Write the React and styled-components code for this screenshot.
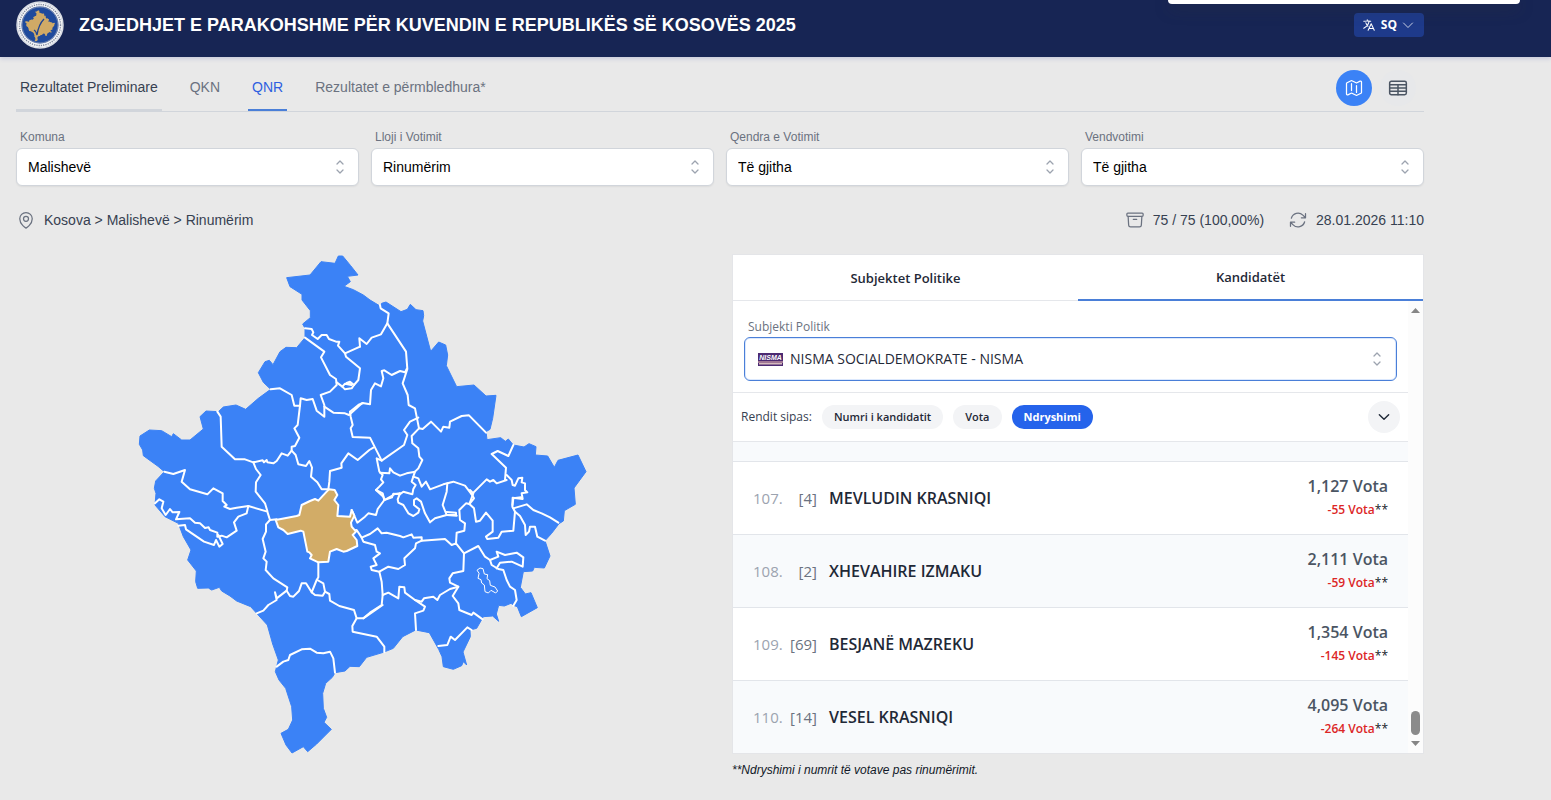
import React from 'react';
import styled, { createGlobalStyle } from 'styled-components';

const sans = "'Liberation Sans', Arial, sans-serif";
const ui = "'Open Sans', 'Noto Sans', sans-serif";

const GlobalStyle = createGlobalStyle`
  *, *::before, *::after { box-sizing: border-box; }
  body { margin: 0; background: #e9e9e9; font-family: ${sans}; font-size: 14px; line-height: 20px; color: #374151; }
  button, select { font: inherit; color: inherit; }
  button { cursor: pointer; border: 0; background: none; padding: 0; }
  a { color: inherit; text-decoration: none; }
`;

const Container = styled.div`
  max-width: 1440px;
  padding: 0 16px;
`;
const Header = styled.header`
  background: #172554;
  box-shadow: 0 2px 4px #c9cbdc;
`;
const HeaderInner = styled(Container)`
  display: flex;
  align-items: center;
  height: 57px;
  padding-bottom: 8px;
  gap: 15px;
`;
const Title = styled.h1`
  flex: 1;
  margin: 0;
  font-size: 18px;
  line-height: 28px;
  font-weight: 700;
  color: #fff;
`;
const Popover = styled.div`
  position: absolute;
  top: 0;
  right: 31px;
  width: 352px;
  height: 4px;
  background: #fff;
  border-radius: 0 0 6px 6px;
  box-shadow: 0 4px 16px rgba(60, 60, 40, 0.4);
`;
const LangButton = styled.button`
  display: flex;
  align-items: center;
  gap: 5px;
  height: 24px;
  padding: 0 10px 0 8px;
  border-radius: 4px;
  background: #1e3a8a;
  color: #fff;
  font-family: ${ui};
  font-size: 12px;
  font-weight: 700;
`;
const NavRow = styled.nav`
  display: flex;
  justify-content: space-between;
  height: 55px;
  border-bottom: 1px solid #d1d5db;
`;
const NavTabs = styled.div`
  display: flex;
  gap: 24px;
`;
const NavTab = styled.a`
  display: flex;
  align-items: center;
  padding: 8px 4px 0;
  border-bottom: 2px solid ${(p) => p.$line || 'transparent'};
  color: ${(p) => p.$color || '#6b7280'};
`;
const ViewButtons = styled.div`
  display: flex;
  align-items: center;
  gap: 8px;
  padding: 8px 8px 0 0;
`;
const ViewButton = styled.button`
  display: grid;
  place-items: center;
  width: 36px;
  height: 36px;
  border-radius: 50%;
  background: ${(p) => (p.$active ? '#3b82f6' : '#e7e8ea')};
  color: ${(p) => (p.$active ? '#fff' : '#4b5563')};
`;
const Filters = styled.div`
  display: grid;
  grid-template-columns: repeat(4, 1fr);
  gap: 12px;
  padding-top: 15px;
`;
const Field = styled.div`
  display: flex;
  flex-direction: column;
  gap: ${(p) => p.$gap || 0}px;
`;
const Label = styled.label`
  padding-left: 4px;
  font-size: 12px;
  line-height: 20px;
  color: #6b7280;
`;
const SelectBox = styled.div`
  display: grid;
  align-items: center;
  height: 38px;
  border: 1px solid #d1d5db;
  border-radius: 6px;
  background: #fff;
  box-shadow: 0 1px 2px rgba(0, 0, 0, 0.06);
  & > * { grid-area: 1 / 1; }
  & > svg { justify-self: end; margin-right: 8px; pointer-events: none; }
`;
const Select = styled.select`
  appearance: none;
  width: 100%;
  height: 100%;
  padding: 0 32px 0 11px;
  border: 0;
  outline: 0;
  background: transparent;
  color: #000;
`;
const PartyBox = styled(SelectBox)`
  height: 44px;
  border-color: #4a7fd8;
  box-shadow: inset 0 0 0 1px #dbe8fd;
  & > svg:first-child { justify-self: start; margin-left: 13px; }
  & > svg:last-child { margin-right: 9px; }
`;
const PartySelect = styled(Select)`
  padding-left: 45px;
  color: #1f2937;
  font-weight: 500;
`;
const InfoRow = styled.div`
  display: flex;
  align-items: center;
  justify-content: space-between;
  padding: 24px 0;
`;
const InfoGroup = styled.div`
  display: flex;
  gap: 24px;
`;
const Info = styled.div`
  display: flex;
  align-items: center;
  gap: 8px;
  & > svg { color: #6b7280; }
`;
const Main = styled.main`
  display: grid;
  grid-template-columns: 1fr 1fr;
  gap: 24px;
`;
const MapArea = styled.div`
  display: flex;
  justify-content: center;
  align-items: flex-start;
`;
const MapSvg = styled.svg`
  height: 500px;
  max-width: 100%;
`;
const Panel = styled.section`
  border: 1px solid #e4e5e8;
  background: #fff;
  font-family: ${ui};
`;
const PanelTabs = styled.div`
  display: grid;
  grid-template-columns: 1fr 1fr;
`;
const PanelTab = styled.button`
  height: 46px;
  border-bottom: ${(p) => (p.$active ? '2px solid #4a7fd8' : '1px solid #e5e7eb')};
  color: #1f2937;
  font-size: 13px;
  font-weight: 600;
`;
const PanelBody = styled.div`
  display: flex;
`;
const Scrolled = styled.div`
  flex: 1;
  min-width: 0;
`;
const ScrollTrack = styled.div`
  display: flex;
  flex-direction: column;
  align-items: center;
  width: 15px;
  padding: 7px 0;
  background: #fcfcfc;
`;
const Thumb = styled.div`
  width: 9px;
  height: 24px;
  margin: auto 0 6px;
  border-radius: 5px;
  background: #8b8b8b;
`;
const PartyField = styled(Field)`
  padding: 16px 11px 11px;
  border-bottom: 1px solid #e5e7eb;
`;
const SortRow = styled.div`
  display: flex;
  align-items: center;
  gap: 10px;
  height: 49px;
  padding: 0 8px;
  border-bottom: 1px solid #e5e7eb;
  font-size: 12px;
  color: #374151;
`;
const Chip = styled.button`
  height: 24px;
  padding: 0 12px;
  border-radius: 12px;
  font-size: 11px;
  font-weight: ${(p) => (p.$active ? 700 : 600)};
  background: ${(p) => (p.$active ? '#2563eb' : '#f3f4f6')};
  color: ${(p) => (p.$active ? '#fff' : '#1f2937')};
`;
const RoundButton = styled.button`
  display: grid;
  place-items: center;
  width: 32px;
  height: 32px;
  margin-left: auto;
  border-radius: 50%;
  background: #f3f4f6;
  color: #1f2937;
`;
const List = styled.ol`
  list-style: none;
  margin: 0;
  padding: 0;
`;
const Row = styled.li`
  display: flex;
  align-items: center;
  height: ${(p) => (p.$clipped ? 20 : 73)}px;
  padding: 0 20px;
  border-bottom: 1px solid #e2e5ea;
  font-size: 16px;
  line-height: 24px;
  &:nth-child(odd) { background: #f8fafc; }
  &:last-child { border-bottom: 0; height: 72px; }
`;
const Rank = styled.span`
  width: 32px;
  font-size: 15px;
  color: #9ca3af;
`;
const Num = styled.span`
  width: 32px;
  margin-right: 12px;
  font-size: 15px;
  text-align: right;
  color: #6b7280;
`;
const Name = styled.span`
  flex: 1;
  font-weight: 650;
  color: #1f2937;
`;
const Votes = styled.div`
  display: flex;
  flex-direction: column;
  align-items: flex-end;
  font-weight: 650;
  color: #4b5563;
`;
const Change = styled.span`
  font-size: 12px;
  font-weight: 600;
  color: #dc2626;
  & > span { font-weight: 400; color: #111827; }
`;
const Note = styled.p`
  margin: 6px 0 0;
  font-size: 12px;
  font-style: italic;
  color: #111827;
`;

const Icon = ({ size = 18, width = 1.5, children }) => (
  <svg width={size} height={size} viewBox="0 0 24 24" fill="none" stroke="currentColor" strokeWidth={width} strokeLinecap="round" strokeLinejoin="round" aria-hidden="true">
    {children}
  </svg>
);
const UpDown = () => (
  <svg width="20" height="20" viewBox="0 0 20 20" fill="none" stroke="#9ca3af" strokeWidth="1.3" strokeLinecap="round" strokeLinejoin="round" aria-hidden="true">
    <path d="M7 7l3-3 3 3M7 13l3 3 3-3" />
  </svg>
);

const outline = '625,33 638,33 662,62 684,90 652,94 661,110 642,124 670,134 700,150 720,165 750,183 755,175 768,171 813,200 832,193 841,178 858,194 879,197 881,212 878,228 902,319 926,291 947,300 953,330 949,362 980,425 1032,420 1068,453 1098,451 1088,520 1080,553 1068,560 1071,584 1112,578 1126,589 1135,582 1150,600 1182,606 1197,596 1218,605 1216,630 1253,633 1273,667 1284,646 1344,630 1368,680 1332,729 1336,778 1303,797 1300,828 1287,836 1265,865 1245,887 1260,933 1243,969 1213,967 1208,978 1180,980 1171,1027 1186,1047 1203,1043 1222,1088 1174,1115 1162,1085 1153,1082 1143,1075 1123,1083 1106,1081 1099,1107 1106,1129 1088,1113 1060,1115 1040,1150 1020,1155 1021,1175 999,1221 1010,1260 1000,1250 995,1262 970,1273 940,1265 936,1235 926,1213 898,1163 857,1155 818,1175 790,1210 760,1222 710,1237 688,1265 660,1264 645,1278 615,1283 607,1297 587,1315 578,1345 580,1390 590,1417 582,1432 604,1453 560,1497 533,1520 520,1505 486,1524 468,1500 453,1465 475,1453 488,1425 485,1385 467,1330 447,1305 436,1280 445,1245 428,1197 412,1140 380,1105 362,1085 320,1068 300,1053 275,1038 268,1027 245,1035 235,1029 203,1030 197,1010 199,978 173,945 183,915 160,875 145,835 105,815 75,780 78,745 73,730 77,708 103,680 84,664 40,632 38,615 28,598 30,573 58,555 95,557 125,575 130,566 155,585 180,585 220,552 210,515 228,498 265,500 280,486 318,480 347,493 385,460 422,433 400,412 385,383 405,350 418,346 429,359 450,320 468,307 500,308 525,278 525,250 518,237 541,218 541,197 516,165 516,148 480,125 470,98 540,90 573,50 615,55';

// District borders, grouped by quadrant of the map.
const borders = [
  {
    at: 'translate(0 0)',
    lines: [
      '525,250 545,252 550,262 546,270 563,282 575,270 590,270 597,282 618,290 628,290 624,302 645,325 690,305',
      '525,278 583,320 573,337 600,390 618,402 620,420 600,440 572,450 583,480 583,515 560,497 548,462 530,465 512,460 510,482 493,482 485,450 450,430 422,433',
      '645,325 648,335 690,370 685,405 672,420 660,410 650,414 664,420 645,416 637,425 620,412',
      '637,425 645,433 665,430 672,420',
      '583,485 610,503 645,505 657,510 690,480 698,474',
      '730,608 718,615 683,645 655,625 634,655 635,668 600,678 598,710 595,733',
      '510,482 503,540 493,550 508,578 495,603 485,605 485,617 497,630 505,658 528,663 538,648 546,668 543,695 562,712 575,733 595,733',
      '485,617 473,632 455,625 440,648 430,655 412,652 410,645 402,652 398,646 370,652 345,643 315,643 275,605 272,515 262,500',
      '370,652 378,672 392,690 378,712 377,740 405,775 412,798',
      '103,680 130,687 165,675 155,710 180,733 232,748 250,730 278,745 278,768 290,780 283,785 300,792 320,788 355,783',
    ],
  },
  {
    at: 'translate(660 0)',
    lines: [
      '30,305 28,280 50,297 65,278 93,268 112,235 116,205 92,190 90,180',
      '0,500 25,480 38,474 60,478 63,435 75,415 93,424 100,400 95,378 103,376 125,390 150,378 165,382 170,372',
      '112,235 168,320 172,372 158,415 173,450 176,480 195,490 207,550 218,552 243,530 273,560 280,545 298,548 300,530 335,513 357,511 408,563',
      '205,518 180,530 162,555 172,570 162,600 95,647 60,578 8,576 2,550 8,540 2,515 0,500',
      '95,647 80,640 88,680 98,690 93,703 100,712 88,725 78,735 98,745 103,765',
      '292,715 290,740 278,780 290,810 320,812',
      '470,705 440,715 430,705 420,710 410,703 365,748 345,722 310,710 280,718 240,733 228,710 215,725 205,700 190,695 195,680 170,685 150,692 130,682 120,670 118,685 90,683',
      '490,600 475,633 443,618 425,627 468,668 465,705',
      '470,690 485,705 488,720 495,722 505,700 517,698 515,712 525,715 525,735 532,742 515,745 518,762 488,758 487,780',
      '207,550 185,573 187,595 205,610 208,635 217,645 205,670 195,680',
      '190,695 185,710 197,720 190,732 187,748 160,740 150,748 130,746 126,757 103,765',
      '365,748 372,760 358,777',
    ],
  },
  {
    at: 'translate(0 735)',
    lines: [
      '355,48 412,65 420,90 440,88',
      '355,48 350,70 325,80 312,97 320,122 290,142 275,137 262,140 262,128 240,120 236,112 225,114 210,100 195,98 180,85 138,88 148,66 128,67 120,57 107,75 95,55 100,35 88,28 75,40',
      '145,107 165,105 168,118 222,155 252,165 258,150 268,170 278,162 265,135',
      '420,90 408,103 408,125 398,147 407,185 400,205 410,215 407,240 430,265 472,292 470,302 440,325 435,307 440,330 415,345 400,362 380,370',
      '470,302 480,318 490,320 507,303 515,280 528,280 545,307 560,270 565,262 565,218',
      '545,307 555,315 578,317 585,305 580,280 562,270',
      '585,305 598,312 600,332 628,348 672,360 680,385 700,385 758,345',
      '680,385 667,408 668,425 740,440 763,470 763,487',
      '440,530 460,515 475,510 480,495 515,478 540,476 560,488 580,490 600,485 610,505 615,548',
    ],
  },
  {
    at: 'translate(660 735)',
    lines: [
      '5,60 22,98 45,80 55,70 78,75 83,57 103,30 135,12 150,10',
      '78,0 100,20 103,30',
      '5,122 20,120 35,143 60,132 83,115 95,130 110,128 150,138 160,142 185,133 190,143 215,142 215,152 285,147 305,165 318,160 342,190',
      '35,143 40,155 75,165 80,185 90,190 70,205 80,225 62,230 65,240 88,245 115,230 145,237 165,225 163,205 195,175 198,160 215,152',
      '88,245 95,275 98,315 95,345 60,368 40,385',
      '98,315 115,308 145,325 148,290 163,292 165,308 195,330 215,335 222,325 250,320 262,330 270,315 300,297 325,290',
      '195,330 225,350 220,362 195,370 198,420',
      '342,190 340,243 308,250 298,265 300,278 325,290 308,318 325,340 328,360 365,375 370,368 398,388',
      '265,468 292,465 302,440 315,450 352,412 365,420',
      '342,190 385,168 405,200 420,210 425,225 445,237 460,240 470,270 480,290 495,300 500,330 490,347',
      '420,210 445,200 440,185 465,195 480,192 500,188 520,202 518,230 485,215 450,218 440,235',
      '318,160 320,128 343,122 345,100 330,90 328,60 348,40 358,42 372,55 378,95 390,92 408,68 428,92 428,125 408,140 412,147 445,143 455,125 490,122 495,65 487,50 490,25 513,22',
      '490,55 530,43 550,60 575,70 600,82 625,98',
      '495,65 510,78 525,105 527,135 537,125 540,110 555,110 562,140 585,152',
      '358,42 370,10 360,0',
      '150,10 143,28 145,38 160,45 175,70 190,78 205,68 208,58 192,45 192,30 200,25 213,35 225,70 240,97 255,85 290,75 318,75 318,68 290,66',
    ],
  },
];
const malisheve = '437,825 500,813 508,810 515,780 540,768 555,762 565,767 590,740 597,733 614,735 622,750 613,765 625,780 622,813 660,815 665,795 673,812 663,833 665,845 678,860 668,870 680,885 682,903 650,918 640,920 620,912 600,920 595,950 565,952 540,940 545,930 538,922 532,920 520,860 512,857 473,867 460,855 445,847';

const KosovoMap = () => (
  <MapSvg viewBox="0 27 1392 1500" role="img" aria-label="Kosova">
    <polygon points={outline} fill="#3b82f6" stroke="#3b82f6" strokeWidth="3" strokeLinejoin="round" />
    <g fill="none" stroke="#fff" strokeWidth="6" strokeLinejoin="round" strokeLinecap="round">
      {borders.map((b) => (
        <g key={b.at} transform={b.at}>
          {b.lines.map((l) => <polyline key={l} points={l} />)}
        </g>
      ))}
      <polygon points={malisheve} fill="#d2ac67" />
      <path strokeWidth="3" d="M1042 975l8-6 9 2 4 16 10 2-2 12 8 6 2 14 14 5 8 12-6 6-14-8-8 8-10-4-2-20-8-6-2-10-9-4 3-14z" />
    </g>
  </MapSvg>
);

const Emblem = () => (
  <svg width="48" height="48" viewBox="0 0 48 48" role="img" aria-label="KQZ">
    <circle cx="24" cy="24" r="23" fill="#1f4593" stroke="#d9dce2" strokeWidth="1.5" />
    <circle cx="24" cy="24" r="20.5" fill="none" stroke="#f2f3f5" strokeWidth="4" />
    <circle cx="24" cy="24" r="20.5" fill="none" stroke="#7d869b" strokeWidth="1.4" strokeDasharray="1.2 1.1" />
    <circle cx="24" cy="24" r="18" fill="#1f4a9c" stroke="#8d99b8" strokeWidth="0.8" />
    <polygon transform="translate(8.6 8.6) scale(0.0222 0.0208)" points={outline} fill="#d0aa66" />
    <path d="M18 29c2 1 2.500 3 3 5 1-7 3-12 7-16" fill="none" stroke="#1f4593" strokeWidth="1.3" />
  </svg>
);

const NismaLogo = () => (
  <svg width="25" height="13" viewBox="0 0 25 13" aria-hidden="true">
    <rect width="25" height="13" fill="#4c2a72" />
    <rect y="8" width="25" height="2" fill="#a07795" />
    <rect x="1" y="10" width="23" height="1.5" fill="#d5b9bd" />
    <text x="12.5" y="7" textAnchor="middle" fontFamily="Liberation Sans, sans-serif" fontSize="7" fontWeight="700" fontStyle="italic" fill="#fff">NISMA</text>
  </svg>
);

const filters = [
  ['komuna', 'Komuna', 'Malishevë'],
  ['lloji', 'Lloji i Votimit', 'Rinumërim'],
  ['qendra', 'Qendra e Votimit', 'Të gjitha'],
  ['vendvotimi', 'Vendvotimi', 'Të gjitha'],
];
const candidates = [
  [107, 4, 'MEVLUDIN KRASNIQI', '1,127', '-55'],
  [108, 2, 'XHEVAHIRE IZMAKU', '2,111', '-59'],
  [109, 69, 'BESJANË MAZREKU', '1,354', '-145'],
  [110, 14, 'VESEL KRASNIQI', '4,095', '-264'],
];

export default function App() {
  return (
    <>
      <GlobalStyle />
      <Header>
        <HeaderInner>
          <Emblem />
          <Title>ZGJEDHJET E PARAKOHSHME PËR KUVENDIN E REPUBLIKËS SË KOSOVËS 2025</Title>
          <LangButton type="button">
            <Icon size={14} width={1.8}><path d="m10.5 21 5.25-11.25L21 21m-9-3h7.5M3 5.621a48.474 48.474 0 0 1 6-.371m0 0c1.12 0 2.233.038 3.334.114M9 5.25V3m3.334 2.364C11.176 10.658 7.69 15.08 3 17.502m9.334-12.138c.896.061 1.785.147 2.666.257m-4.589 8.495a18.023 18.023 0 0 1-3.827-5.802" /></Icon>
            SQ
            <Icon size={12}><path d="M3 8l9 9 9-9" /></Icon>
          </LangButton>
        </HeaderInner>
      </Header>
      <Popover />
      <Container>
        <NavRow>
          <NavTabs>
            <NavTab href="#preliminare" $line="#d1d5db" $color="#374151">Rezultatet Preliminare</NavTab>
            <NavTab href="#qkn">QKN</NavTab>
            <NavTab href="#qnr" $line="#4a7fd8" $color="#2f5fe0">QNR</NavTab>
            <NavTab href="#permbledhura">Rezultatet e përmbledhura*</NavTab>
          </NavTabs>
          <ViewButtons>
            <ViewButton type="button" $active aria-label="Harta">
              <Icon size={20}><path d="M9 6.75V15m6-6v8.25m.503 3.498 4.875-2.437c.381-.19.622-.58.622-1.006V4.82c0-.836-.88-1.38-1.628-1.006l-3.869 1.934c-.317.159-.69.159-1.006 0L9.503 3.252a1.125 1.125 0 0 0-1.006 0L3.622 5.689C3.24 5.88 3 6.27 3 6.695V19.18c0 .836.88 1.38 1.628 1.006l3.869-1.934c.317-.159.69-.159 1.006 0l4.994 2.497c.317.158.69.158 1.006 0Z" /></Icon>
            </ViewButton>
            <ViewButton type="button" aria-label="Tabela">
              <Icon size={20} width={1.8}><rect x="2" y="4" width="20" height="16" rx="2" /><path d="M2 8h20M2 12h20M2 16h20M12 8v12" /></Icon>
            </ViewButton>
          </ViewButtons>
        </NavRow>
        <Filters>
          {filters.map(([id, label, value]) => (
            <Field key={id} $gap={1}>
              <Label htmlFor={id}>{label}</Label>
              <SelectBox>
                <Select id={id}><option>{value}</option></Select>
                <UpDown />
              </SelectBox>
            </Field>
          ))}
        </Filters>
        <InfoRow>
          <Info>
            <Icon size={20}><path d="M15 10.5a3 3 0 1 1-6 0 3 3 0 0 1 6 0Z" /><path d="M19.5 10.5c0 7.142-7.5 11.25-7.5 11.25S4.5 17.642 4.5 10.5a7.5 7.5 0 1 1 15 0Z" /></Icon>
            Kosova &gt; Malishevë &gt; Rinumërim
          </Info>
          <InfoGroup>
            <Info>
              <Icon size={20}><path d="m20.25 7.5-.625 10.632a2.25 2.25 0 0 1-2.247 2.118H6.622a2.25 2.25 0 0 1-2.247-2.118L3.75 7.5M10 11.25h4M3.375 7.5h17.25c.621 0 1.125-.504 1.125-1.125v-1.5c0-.621-.504-1.125-1.125-1.125H3.375c-.621 0-1.125.504-1.125 1.125v1.5c0 .621.504 1.125 1.125 1.125Z" /></Icon>
              75 / 75 (100,00%)
            </Info>
            <Info>
              <Icon size={20}><path d="M16.023 9.348h4.992v-.001M2.985 19.644v-4.992m0 0h4.992m-4.993 0 3.181 3.183a8.25 8.25 0 0 0 13.803-3.7M4.031 9.865a8.25 8.25 0 0 1 13.803-3.7l3.181 3.182m0-4.991v4.99" /></Icon>
              28.01.2026 11:10
            </Info>
          </InfoGroup>
        </InfoRow>
        <Main>
          <MapArea><KosovoMap /></MapArea>
          <div>
            <Panel>
              <PanelTabs>
                <PanelTab type="button">Subjektet Politike</PanelTab>
                <PanelTab type="button" $active>Kandidatët</PanelTab>
              </PanelTabs>
              <PanelBody>
                <Scrolled>
                  <PartyField>
                    <Label htmlFor="subjekti">Subjekti Politik</Label>
                    <PartyBox>
                      <NismaLogo />
                      <PartySelect id="subjekti"><option>NISMA SOCIALDEMOKRATE - NISMA</option></PartySelect>
                      <UpDown />
                    </PartyBox>
                  </PartyField>
                  <SortRow>
                    <span>Rendit sipas:</span>
                    <Chip type="button">Numri i kandidatit</Chip>
                    <Chip type="button">Vota</Chip>
                    <Chip type="button" $active>Ndryshimi</Chip>
                    <RoundButton type="button" aria-label="Hap">
                      <Icon size={14} width={2.4}><path d="M4 8l8 8 8-8" /></Icon>
                    </RoundButton>
                  </SortRow>
                  <List>
                    <Row $clipped aria-hidden="true" />
                    {candidates.map(([rank, num, name, votes, change]) => (
                      <Row key={rank}>
                        <Rank>{rank}.</Rank>
                        <Num>[{num}]</Num>
                        <Name>{name}</Name>
                        <Votes>
                          {votes} Vota
                          <Change>{change} Vota<span>**</span></Change>
                        </Votes>
                      </Row>
                    ))}
                  </List>
                </Scrolled>
                <ScrollTrack>
                  <svg width="9" height="5" viewBox="0 0 9 5" aria-hidden="true"><path d="M0 5L4.5 0 9 5z" fill="#868686" /></svg>
                  <Thumb />
                  <svg width="9" height="5" viewBox="0 0 9 5" aria-hidden="true"><path d="M0 0L4.5 5 9 0z" fill="#868686" /></svg>
                </ScrollTrack>
              </PanelBody>
            </Panel>
            <Note>**Ndryshimi i numrit të votave pas rinumërimit.</Note>
          </div>
        </Main>
      </Container>
    </>
  );
}
